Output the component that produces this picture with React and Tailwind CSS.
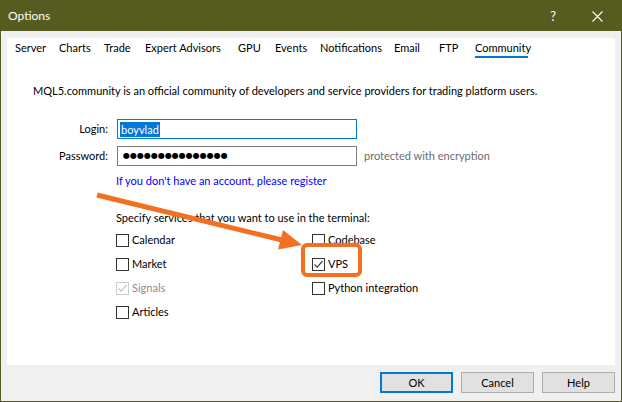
import React from 'react';

const tabs = [
  { label: 'Server', w: 'w-[44px]' },
  { label: 'Charts', w: 'w-[45px]' },
  { label: 'Trade', w: 'w-[41px]' },
  { label: 'Expert Advisors', w: 'w-[93px]' },
  { label: 'GPU', w: 'w-[37px]' },
  { label: 'Events', w: 'w-[45px]' },
  { label: 'Notifications', w: 'w-[74px]' },
  { label: 'Email', w: 'w-[45px]' },
  { label: 'FTP', w: 'w-[36px]' },
];

const Check = ({ color }) => (
  <svg width="11" height="11" viewBox="0 0 11 11" className="block">
    <path d="M1.5 5.5 L4.2 8.2 L9.5 2.2" fill="none" stroke={color} strokeWidth="1.1" />
  </svg>
);

const CheckBox = ({ label, checked, disabled }) => (
  <div className="flex items-center h-[24px]">
    <div
      className={`w-[13px] h-[13px] border bg-white flex items-center justify-center ${disabled ? 'border-[#cccccc]' : 'border-[#333333]'}`}
    >
      {checked && <Check color={disabled ? '#bcbcbc' : '#333333'} />}
    </div>
    <span className={`ml-[3px] ${disabled ? 'text-[#8d8d8d]' : 'text-black'}`}>{label}</span>
  </div>
);

const Button = ({ children, primary }) => (
  <button
    className={`w-[73px] h-[21px] bg-[#e1e1e1] text-black flex items-center justify-center ${primary ? 'border-2 border-[#0078d7]' : 'border border-[#adadad]'}`}
  >
    {children}
  </button>
);

export default function App() {
  return (
    <div
      className="relative w-[622px] h-[402px] bg-[#565b1f] p-px flex flex-col text-[11px] leading-[16px] text-black"
      style={{ fontFamily: 'Lato, "Noto Sans", sans-serif' }}
    >
      {/* Title bar */}
      <div className="h-[30px] flex items-center text-white">
        <span className="ml-[7px] text-[12px]">Options</span>
        <span className="ml-auto mr-[36px] text-[13px]">?</span>
        <svg width="11" height="11" viewBox="0 0 11 11" className="mr-[18px]">
          <path d="M0.5 0.5 L10.5 10.5 M10.5 0.5 L0.5 10.5" stroke="#ffffff" strokeWidth="1.1" />
        </svg>
      </div>

      {/* Body */}
      <div className="flex-1 bg-[#f0f0f0] flex flex-col">
        <div className="mt-[7px] mx-[6px] h-[327px] bg-white flex flex-col">
          {/* Tabs */}
          <div className="mt-[2px] pl-[8px] flex">
            {tabs.map((t) => (
              <div key={t.label} className={`${t.w} h-[18px] whitespace-nowrap`}>
                {t.label}
              </div>
            ))}
            <div className="h-[18px] flex flex-col">
              <span className="h-[16px]">Community</span>
              <div className="h-[2px] bg-[#0078d7] w-[53px]" />
            </div>
          </div>

          <div className="mt-[25px] pl-[26px] whitespace-nowrap">
            MQL5.community is an official community of developers and service providers for trading platform users.
          </div>

          {/* Login */}
          <div className="mt-[20px] flex items-center">
            <div className="w-[101px] text-right">Login:</div>
            <div className="ml-[9px] w-[240px] h-[20px] border border-[#0078d7] flex items-center pl-[2px]">
              <span className="bg-[#0078d7] text-white px-px leading-[15px]">boyvlad</span>
            </div>
          </div>
          <div className="mt-[7px] flex items-center">
            <div className="w-[101px] text-right">Password:</div>
            <div className="ml-[9px] w-[240px] h-[20px] border border-[#7a7a7a] flex items-center pl-[5px]">
              <span className="text-[8px]" style={{ fontFamily: '"DejaVu Sans", sans-serif' }}>
                ●●●●●●●●●●●●●●●
              </span>
            </div>
            <div className="ml-[7px] text-[#6d6d6d]">protected with encryption</div>
          </div>

          <div className="mt-[7px] pl-[109px] text-[#0000ff]">If you don't have an account, please register</div>

          <div className="mt-[21px] pl-[109px]">Specify services that you want to use in the terminal:</div>

          <div className="mt-[2px] pl-[109px] flex">
            <div className="w-[196px] flex flex-col">
              <CheckBox label="Calendar" />
              <CheckBox label="Market" />
              <CheckBox label="Signals" checked disabled />
              <CheckBox label="Articles" />
            </div>
            <div className="flex flex-col">
              <CheckBox label="Codebase" />
              <CheckBox label="VPS" checked />
              <CheckBox label="Python integration" />
            </div>
          </div>
        </div>

        {/* Buttons */}
        <div className="mt-[7px] pr-[6px] flex justify-end gap-2">
          <Button primary>OK</Button>
          <Button>Cancel</Button>
          <Button>Help</Button>
        </div>
      </div>

      {/* Annotation overlay */}
      <svg className="absolute inset-0 pointer-events-none" width="622" height="402" viewBox="0 0 622 402">
        <line x1="97" y1="195" x2="281" y2="239.8" stroke="#f37021" strokeWidth="5" />
        <polygon points="302,245 278,249.5 283,230" fill="#f37021" />
        <rect x="303" y="245" width="57" height="30" rx="4" fill="none" stroke="#f37021" strokeWidth="4" />
      </svg>
    </div>
  );
}
